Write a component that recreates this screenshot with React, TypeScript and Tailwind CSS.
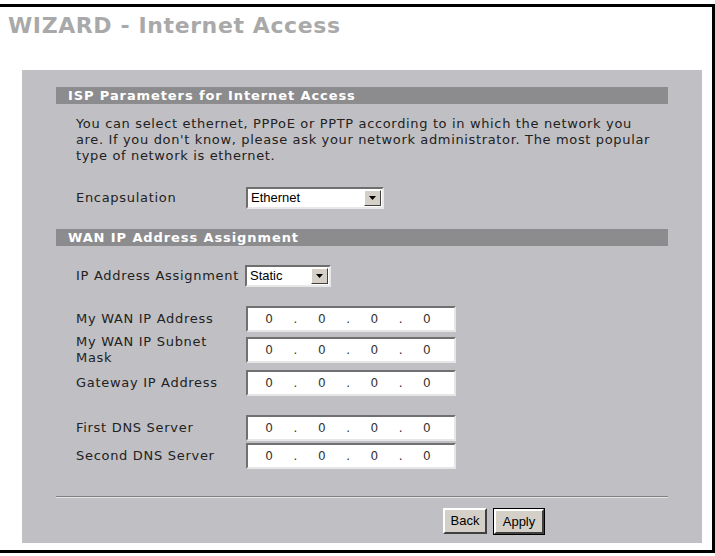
const labelFont = { fontFamily: '"DejaVu Sans", Verdana, sans-serif' };

function SectionBar({ title }: { title: string }) {
  return (
    <div className="h-[17px] bg-[#8c8c8e] pl-[12px] text-[13px] tracking-[0.9px] leading-[17px] font-bold text-white">
      {title}
    </div>
  );
}

function SelectBox({ value, width }: { value: string; width: string }) {
  return (
    <div
      className={`${width} h-[22px] flex items-stretch bg-white border-2 border-t-[#6e6e6e] border-l-[#6e6e6e] border-b-[#e8e8e8] border-r-[#e8e8e8]`}
    >
      <span className="flex-1 pl-[3px] text-[13px] leading-[18px] tracking-normal text-black font-['Liberation_Sans',Arial,sans-serif]">
        {value}
      </span>
      <span className="w-[17px] m-[1px] flex items-center justify-center bg-[#d4d0c8] border border-t-white border-l-white border-b-[#404040] border-r-[#404040]">
        <svg width="7" height="4" viewBox="0 0 7 4">
          <path d="M0 0 H7 L3.5 4 Z" fill="#000" />
        </svg>
      </span>
    </div>
  );
}

function IpInput() {
  const parts = ['0', '.', '0', '.', '0', '.', '0'];
  return (
    <div className="w-[210px] h-[26px] flex items-center pl-[8px] bg-white border-2 border-t-[#707070] border-l-[#707070] border-b-[#e6e6e6] border-r-[#e6e6e6]">
      {parts.map((p, i) => (
        <span key={i} className="w-[26.3px] text-center text-[12px] tracking-normal text-[#333]" style={labelFont}>
          {p}
        </span>
      ))}
    </div>
  );
}

function IpRow({ label, mt }: { label: React.ReactNode; mt: string }) {
  return (
    <div className={`flex items-center ${mt}`}>
      <div className="w-[170px] text-[13px] tracking-[0.7px] leading-[16px] text-[#222]" style={labelFont}>
        {label}
      </div>
      <IpInput />
    </div>
  );
}

export default function App() {
  return (
    <div className="w-[715px] h-[556px] bg-white overflow-hidden">
      <div className="mt-[4px] h-[549px] border-t-[3px] border-r-[3px] border-b-[3px] border-black flex flex-col">
        <div className="pl-[8px] pt-[5px] h-[63px] text-[22px] tracking-[0.6px] font-bold text-[#a9a9a9] leading-[28px]" style={labelFont}>
          WIZARD - Internet Access
        </div>

        <div className="ml-[22px] w-[680px] h-[473px] bg-[#c0bfc3] px-[34px] pt-[17px]" style={labelFont}>
          <SectionBar title="ISP Parameters for Internet Access" />

          <p className="mt-[12px] pl-[20px] text-[13px] tracking-[0.65px] leading-[16px] text-[#222] whitespace-nowrap">
            You can select ethernet, PPPoE or PPTP according to in which the network you
            <br />
            are. If you don't know, please ask your network administrator. The most popular
            <br />
            type of network is ethernet.
          </p>

          <div className="mt-[23px] pl-[20px] flex items-center">
            <div className="w-[170px] text-[13px] tracking-[0.7px] text-[#222]">Encapsulation</div>
            <SelectBox value="Ethernet" width="w-[138px]" />
          </div>

          <div className="mt-[20px]">
            <SectionBar title="WAN IP Address Assignment" />
          </div>

          <div className="mt-[19px] pl-[20px] flex items-center">
            <div className="w-[169px] text-[13px] tracking-[0.7px] text-[#222] whitespace-nowrap">IP Address Assignment</div>
            <SelectBox value="Static" width="w-[86px]" />
          </div>

          <div className="pl-[20px]">
            <IpRow label="My WAN IP Address" mt="mt-[19px]" />
            <IpRow
              label={
                <>
                  My WAN IP Subnet
                  <br />
                  Mask
                </>
              }
              mt="mt-[2px]"
            />
            <IpRow label="Gateway IP Address" mt="mt-[4px]" />
            <IpRow label="First DNS Server" mt="mt-[19px]" />
            <IpRow label="Second DNS Server" mt="mt-[2px]" />
          </div>

          <div className="mt-[27px] h-[2px] border-t border-t-[#808080] border-b border-b-[#e4e4e4]" />

          <div className="mt-[10px] pl-[387px] flex gap-[6px] font-['Liberation_Sans',Arial,sans-serif] text-[13px] text-black">
            <button className="w-[44px] h-[26px] bg-[#d4d0c8] border-2 border-t-white border-l-white border-b-[#404040] border-r-[#404040]">
              Back
            </button>
            <button className="w-[52px] h-[27px] bg-[#d4d0c8] border border-black">
              <span className="flex items-center justify-center w-full h-full border-2 border-t-white border-l-white border-b-[#404040] border-r-[#404040]">
                Apply
              </span>
            </button>
          </div>
        </div>
      </div>
    </div>
  );
}
